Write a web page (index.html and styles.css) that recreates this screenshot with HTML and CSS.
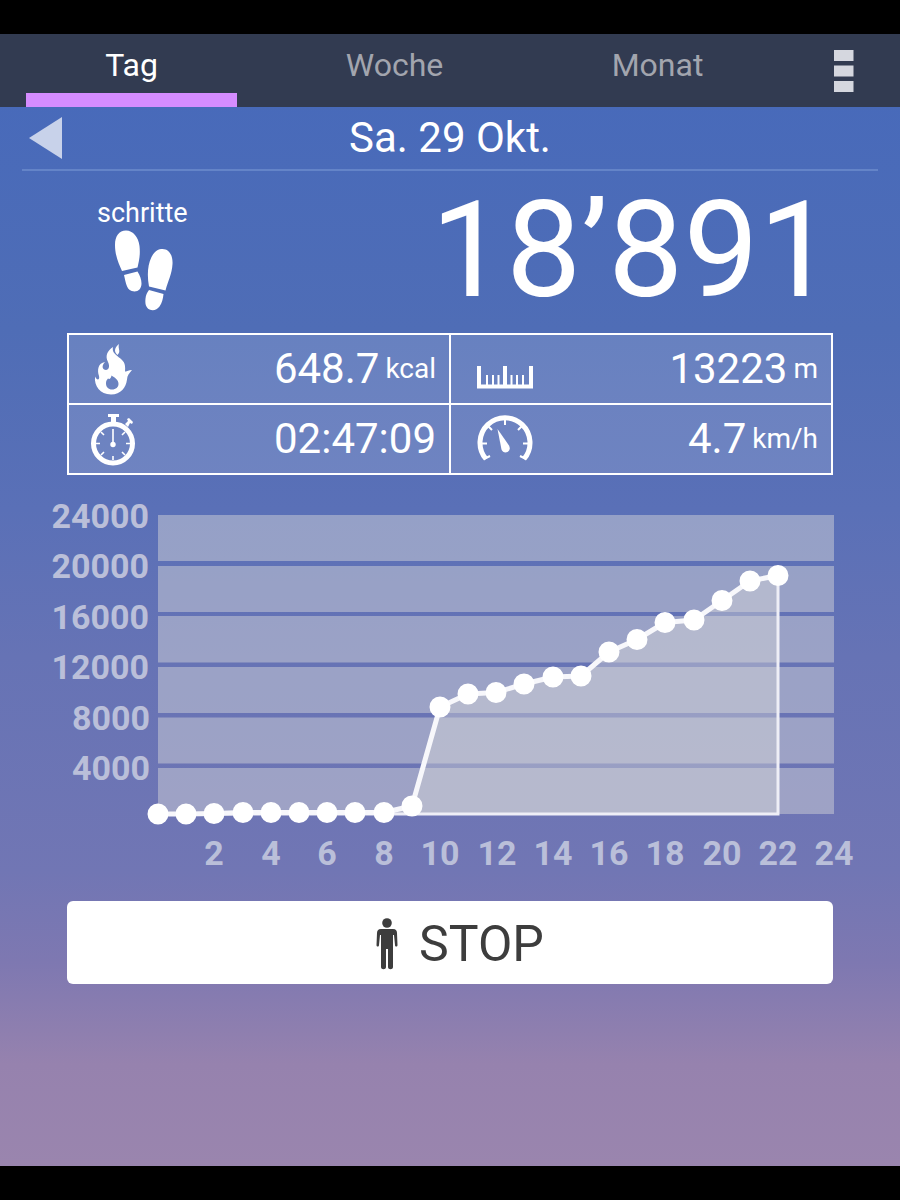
FILE: index.html
```
<!DOCTYPE html>
<html lang="de">
<head>
<meta charset="utf-8">
<meta name="viewport" content="width=device-width, initial-scale=1">
<title>Schrittzähler</title>
<link rel="stylesheet" href="styles.css">
</head>
<body>
<div class="app">
  <header class="topbar">
    <nav class="tabs">
      <button class="tab tab-active" type="button">Tag</button>
      <button class="tab" type="button">Woche</button>
      <button class="tab" type="button">Monat</button>
    </nav>
    <button class="menu" type="button" aria-label="Menü">
      <svg width="20" height="42" viewBox="0 0 20 42"><path d="M0 0h19.500v11H0zM0 15.500h19.500v11H0zM0 31h19.500v11H0z" fill="#d5d7df"/></svg>
    </button>
  </header>

  <main>
    <div class="datebar">
      <button class="prev" type="button" aria-label="Vorheriger Tag">
        <svg width="33" height="42" viewBox="0 0 33 42"><path d="M0 21 33 0v42z" fill="#c8d2ea"/></svg>
      </button>
      <h1 class="date">Sa. 29 Okt.</h1>
    </div>

    <section class="steps">
      <div class="steps-label">
        <span>schritte</span>
        <svg width="60" height="82" viewBox="0 0 60 82" fill="#fff" aria-hidden="true">
          <path d="M8 41C5 34 1 26 1 15 1 6 5 .500 12 .500 19 .500 24.500 7 25.500 16c1 9-.5 15-2 21.500z"/>
          <path d="M10 45 23.500 41.500c2.500 4 4 8 4 12 0 5-3 8-7 8-8 0-8.500-8.500-10.500-16.500z"/>
          <path d="M35 56.500C33 46 33.500 35 37.500 27c3-6 7-8 11-8 7 0 10.500 7 10 15-.5 10-4.500 17-7 26.500z"/>
          <path d="M35 60 49.500 64c-.5 5-1.500 9-4 12.500C43 80 39 81 35.500 79.500c-4-2-4.500-6.500-4-11 .3-3 1.500-6 3.500-8.500z"/>
        </svg>
      </div>
      <div class="steps-value">18’891</div>
    </section>

    <section class="stats">
      <div class="stat">
        <svg class="icon" width="56" height="56" viewBox="0 0 56 56" fill="#fff" aria-hidden="true">
          <path d="M33 3c-5 4-5 8-1.500 11 4-4 0-6 1.500-11z"/>
          <path fill-rule="evenodd" d="M27 6c-6 4-8 9-5 15 2 4 1 8-2 8-3.500 0-5-4-1-8-7 1-8 8-6 14 1 4-2 5-4 .500C8 45 14 53.500 25 53.500c10 0 15-7 16-15 .3-4 2-6 5-9.500-4 0-5 2-7 1.500 1-9-2-11-6-14-5-4-7-6-6-10.500zM25.500 34.500c4 2.500 7 4.500 7 8.500 0 3-2.500 5.500-6.500 5.500-3.500 0-6-2.500-6-6 0-2 .5-3.500 2-5 1.500 1 3 0 3.500-3z"/>
        </svg>
        <p class="amount">648.7<small>kcal</small></p>
      </div>
      <div class="stat">
        <svg class="icon" width="56" height="56" viewBox="0 0 56 56" aria-hidden="true">
          <path d="M2 25v20.500h52V25M28 25v20" fill="none" stroke="#fff" stroke-width="4"/>
          <path d="M10 34v11M16 34v11M21.500 34v11M34.500 34v11M40 34v11M46 34v11" stroke="#fff" stroke-width="2"/>
        </svg>
        <p class="amount">13223<small>m</small></p>
      </div>
      <div class="stat">
        <svg class="icon" width="56" height="56" viewBox="0 0 56 56" aria-hidden="true">
          <circle cx="27" cy="32.500" r="19.500" fill="none" stroke="#fff" stroke-width="5"/>
          <path d="M22 3h11v3h-3v7h-5V6h-3zM39 13l3-3-1-2 2-1 4 4-1 2-2-1-2 4z" fill="#fff"/>
          <path d="M27 18v14M27 45v4M15 21l3 3M39 21l-3 3M15 44l3-3M39 44l-3-3M9 32.500h5M40 32.500h5" stroke="#fff" stroke-width="1.600"/>
          <circle cx="27" cy="33.500" r="2.700" fill="#fff"/>
        </svg>
        <p class="amount amount-time">02:47:09</p>
      </div>
      <div class="stat">
        <svg class="icon" width="56" height="56" viewBox="0 0 56 56" aria-hidden="true">
          <path d="M9 48A25 25 0 1 1 47 48" fill="none" stroke="#fff" stroke-width="5"/>
          <path d="M28 7v7M4 32.500h6M46 32.500h6M11 15l4 4M45 15l-4 4M7 48l6-3M49 48l-6-3" stroke="#fff" stroke-width="2"/>
          <path d="M20.500 18 32 34.500c1.500 3 .5 5.500-1.500 6.500s-5 .500-6-2.500z" fill="#fff"/>
        </svg>
        <p class="amount">4.7<small>km/h</small></p>
      </div>
    </section>

    <svg class="chart" viewBox="0 -15 900 395" role="img" aria-label="Schritte pro Stunde">
      <path class="band" d="M158 15h676v46H158zM158 66h676v46H158zM158 116h676v46.500H158zM158 167h676v46H158zM158 217.500h676v46H158zM158 268h676v46H158z"/>
      <g class="tick tick-y">
        <text x="149" y="28">24000</text>
        <text x="149" y="78">20000</text>
        <text x="149" y="129">16000</text>
        <text x="149" y="179">12000</text>
        <text x="150" y="230">8000</text>
        <text x="150" y="280">4000</text>
      </g>
      <g class="tick tick-x">
        <text x="214" y="365">2</text>
        <text x="271" y="365">4</text>
        <text x="327" y="365">6</text>
        <text x="384" y="365">8</text>
        <text x="440" y="365">10</text>
        <text x="497" y="365">12</text>
        <text x="553" y="365">14</text>
        <text x="609" y="365">16</text>
        <text x="665" y="365">18</text>
        <text x="722" y="365">20</text>
        <text x="778" y="365">22</text>
        <text x="834" y="365">24</text>
      </g>
      <path class="area" d="M158 314 384 312 412 306 440 207 468 194 496 192.500 524 184 553 177 581 176 609 152 637 139.500 665 122.500 694 120 722 100.500 750 81 778 75.500V314z"/>
      <path class="edge" d="M158 314H778V75.500"/>
      <polyline class="line" points="158,314 186,314 214,313.500 243,312.500 271,312.500 299,312.500 327,312.500 355,312.500 384,312.500 412,306 440,207 468,194 496,192.500 524,184 553,177 581,176 609,152 637,139.500 665,122.500 694,120 722,100.500 750,81 778,75.500"/>
      <path class="dots" d="M158 314h0M186 314h0M214 313.500h0M243 312.500h0M271 312.500h0M299 312.500h0M327 312.500h0M355 312.500h0M384 312.500h0M412 306h0M440 207h0M468 194h0M496 192.500h0M524 184h0M553 177h0M581 176h0M609 152h0M637 139.500h0M665 122.500h0M694 120h0M722 100.500h0M750 81h0M778 75.500h0"/>
    </svg>

    <button class="stop" type="button">
      <svg width="22" height="52" viewBox="0 0 22 52" fill="#3d3d3d" aria-hidden="true">
        <circle cx="11" cy="5" r="4.800"/>
        <path d="M5 11h12c3 0 4 2 4 4l.5 12c0 2-2.500 2-2.500 0l-1-10h-1V49c0 3-5 3-5 0V31h-2v18c0 3-5 3-5 0V17H4l-1 10c0 2-2.500 2-2.500 0L1 15c0-2 1-4 4-4z"/>
      </svg>
      <span>STOP</span>
    </button>
  </main>
</div>
</body>
</html>
```

FILE: styles.css
```
* {
  box-sizing: border-box;
}

body {
  margin: 0;
  padding: 34px 0;
  background: #000;
  color: #fff;
  font-family: Roboto, "Liberation Sans", sans-serif;
}

button {
  margin: 0;
  padding: 0;
  border: 0;
  background: none;
  color: inherit;
  font: inherit;
  cursor: pointer;
}

svg {
  display: block;
  flex: none;
}

.app {
  min-height: calc(100vh - 68px);
  background: linear-gradient(#486aba 6%, #4f6db6 26%, #5a70b7 42%, #6673b5 55%, #7176b4 74%, #7e78b1 82%, #9682ae 91%, #9a85ae 100%);
}

.topbar {
  display: grid;
  grid-template-columns: 789fr 111fr;
  height: 73px;
  background: #323b51;
}

.tabs {
  display: grid;
  grid-template-columns: repeat(3, 1fr);
}

.tab {
  display: flex;
  flex-direction: column;
  align-items: center;
  justify-content: space-between;
  padding: 11px 26px 0;
  color: #a2a5ae;
  font-size: 32px;
  line-height: 40px;
}

.tab::after {
  content: "";
  width: 100%;
  height: 14px;
}

.tab-active {
  color: #fff;
}

.tab-active::after {
  background: #d58cff;
}

.menu {
  display: grid;
  place-items: center;
  padding-right: 2px;
}

.datebar {
  display: grid;
  grid-template-columns: 40px 1fr 40px;
  align-items: center;
  height: 64px;
  margin: 0 22px;
  padding: 0 7px;
  border-bottom: 2px solid #6484c8;
}

.date {
  margin: 0;
  font-size: 42px;
  font-weight: 400;
  line-height: 50px;
  text-align: center;
}

.steps {
  display: flex;
  justify-content: space-between;
  height: 162px;
  padding: 0 66px 0 97px;
}

.steps-label {
  display: flex;
  flex-direction: column;
  align-items: center;
  padding-top: 25px;
  font-size: 27px;
  line-height: 34px;
}

.steps-label svg {
  margin-left: 4px;
}

.steps-value {
  font-size: 134px;
  line-height: 160px;
}

.stats {
  display: grid;
  grid-template-columns: 1fr 1fr;
  gap: 2px;
  margin: 0 67px;
  border: 2px solid #fff;
  background: linear-gradient(#fff, #fff) center / 2px 100% no-repeat, linear-gradient(#fff, #fff) center / 100% 2px no-repeat, rgba(255, 255, 255, 0.14);
}

.stat {
  display: flex;
  align-items: center;
  justify-content: space-between;
  height: 68px;
  padding: 0 13px 0 17px;
}

.stat:nth-child(even) {
  padding-left: 26px;
}

.amount {
  margin: 0;
  font-size: 42px;
  line-height: 50px;
  white-space: nowrap;
}

.amount small {
  margin-left: 6px;
  font-size: 28px;
  vertical-align: 5px;
}

.chart {
  width: 100%;
  height: auto;
  margin-top: 10px;
}

.band {
  fill: #c8c9d4;
  fill-opacity: 0.54;
}

.tick {
  fill: #babfd9;
  font-size: 34px;
  font-weight: 700;
}

.tick-y {
  text-anchor: end;
}

.tick-x {
  text-anchor: middle;
}

.area {
  fill: #d8d8da;
  fill-opacity: 0.42;
}

.edge {
  fill: none;
  stroke: #eeeef6;
  stroke-width: 3;
}

.line {
  fill: none;
  stroke: #f7f7fb;
  stroke-width: 5;
  stroke-linejoin: round;
}

.dots {
  stroke: #fff;
  stroke-width: 21;
  stroke-linecap: round;
}

.stop {
  display: flex;
  align-items: center;
  justify-content: center;
  gap: 21px;
  width: calc(100% - 134px);
  height: 83px;
  margin: 21px 67px 0;
  padding: 3px 0 0 20px;
  border-radius: 6px;
  background: #fff;
  color: #3d3d3d;
  font-size: 50px;
  line-height: 58px;
}
```
